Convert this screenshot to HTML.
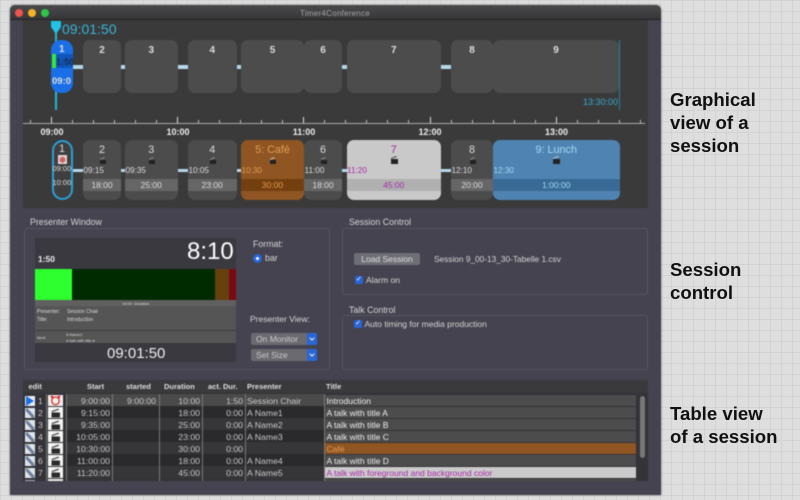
<!DOCTYPE html>
<html><head><meta charset="utf-8"><style>
html,body{margin:0;padding:0;width:800px;height:500px;overflow:hidden}
body{position:relative;font-family:"Liberation Sans",sans-serif;background-color:#dedede;
background-image:linear-gradient(#d3d3d3 1px,transparent 1px),linear-gradient(90deg,#d3d3d3 1px,transparent 1px);background-size:11px 11px}
div,span{position:absolute;box-sizing:border-box;white-space:nowrap}
svg{position:absolute}
#all{left:0;top:0;width:800px;height:500px;filter:blur(.45px)}
.b{background:#4c4c4c;border-radius:7px;height:53px;top:40px;color:#ddd;font-weight:bold;font-size:10px;text-align:center;padding-top:5px}
.c{background:#b5d8ea;height:4px;top:65px}
.c2{background:#b5d8ea;height:3.5px;top:168.5px}
.t{background:#bbb;width:1px;top:120px;height:3px}
.T{background:#ddd;width:1px;top:117px;height:6px}
.h{color:#eee;font-weight:bold;font-size:9px;top:127px;width:40px;text-align:center}
.s{background:#4c4c4c;border-radius:7px;top:140px;height:59.5px;color:#ddd;overflow:visible}
.n{left:0;right:0;top:4px;text-align:center;font-size:10.8px}
.d{left:0;right:0;top:38.5px;height:12px;background:#666;text-align:center;font-size:8.5px;line-height:12px}
.st{left:0.5px;top:26px;font-size:8.2px}
.g{border:1px solid #55545f;border-radius:3px;background:#44434f}
.l{color:#d6d6d6;font-size:8.8px}
.hd{top:380px;height:13px;font-size:7.5px;font-weight:bold;color:#ddd;line-height:13px;background:#3a3a3d}
.sep{width:1px;background:#777;top:394px;height:87px}
.r{font-size:8.7px;color:#c8c8c8;line-height:12px;height:12px;white-space:nowrap}
.tt{font-size:8.5px;left:326.5px}
.lab{left:670px;font-size:18.6px;font-weight:bold;color:#111;line-height:23px}
.ck{width:8px;height:8px;background:#2a66d8;border-radius:2px;color:#fff;font-size:7px;line-height:8px;text-align:center}
.sel{background:#6a6a70;border-radius:2px;height:12px;width:66px;left:251px;color:#ccc;font-size:8.5px;line-height:12px;padding-left:5px}
.sel i{position:absolute;right:0;top:0;width:10px;height:12px;background:#2a66d8;border-radius:0 2px 2px 0}
.sel svg{right:2px;top:4px}
</style></head><body>
<svg width="0" height="0" style="position:absolute"><defs>
<symbol id="clap" viewBox="0 0 15 11" preserveAspectRatio="none"><rect width="15" height="11" fill="#f4f4f4"/><path d="M3.500 5.500h8.500V10.500H3.500z" fill="#2a2a2a"/><path d="M3.500 4L10.500 1.500l.6 1.200-7 2.500z" fill="#555"/></symbol>
<symbol id="edit" viewBox="0 0 14 14"><rect width="14" height="14" fill="#dfe3ea"/><path d="M1 1L4 1 13 11 13 14 10 14 1 4z" fill="#6d7f9c"/></symbol>
</defs></svg>
<div id="all">
<div style="left:10px;top:5px;width:651px;height:490px;background:#44434f;border-radius:5px 5px 0 0;box-shadow:0 0 2px #777"></div>
<div style="left:10px;top:5px;width:651px;height:15px;background:linear-gradient(#4a4a4c,#373739);border-radius:5px 5px 0 0;border-bottom:1px solid #222"></div>
<div style="left:15px;top:9px;width:8px;height:8px;border-radius:50%;background:#f0524f"></div>
<div style="left:28px;top:9px;width:8px;height:8px;border-radius:50%;background:#f5b324"></div>
<div style="left:41px;top:9px;width:8px;height:8px;border-radius:50%;background:#2ec445"></div>
<div style="left:300px;top:8.500px;font-size:8px;color:#a5a5a5;letter-spacing:.25px">Timer4Conference</div>

<div style="left:23px;top:20px;width:625px;height:188px;background:#3a3a3a"></div>
<!-- top graphical -->
<div style="left:54.5px;top:28px;width:2px;height:82px;background:#23b5d8"></div>
<svg style="left:50px;top:20px" width="12" height="15"><path d="M1 1H11V7L6 14 1 7z" fill="#22c3e6"/></svg>
<div style="left:62px;top:21px;font-size:14px;color:#37b4da">09:01:50</div>
<div class="c" style="left:72px;width:11px"></div><div class="c" style="left:121px;width:4px"></div><div class="c" style="left:177.5px;width:10.5px"></div><div class="c" style="left:236.5px;width:4.5px"></div><div class="c" style="left:342px;width:4.5px"></div><div class="c" style="left:441px;width:10px"></div>
<div class="b" style="left:83px;width:38px">2</div>
<div class="b" style="left:125px;width:52.5px">3</div>
<div class="b" style="left:188px;width:48.5px">4</div>
<div class="b" style="left:241px;width:63px">5</div>
<div class="b" style="left:304px;width:38px">6</div>
<div class="b" style="left:346.5px;width:94.5px">7</div>
<div class="b" style="left:451px;width:42px">8</div>
<div class="b" style="left:493px;width:126px">9</div>
<div style="left:51px;top:40px;width:21.5px;height:53px;background:#1a6fe6;border-radius:10px;overflow:hidden;color:#ddd;font-weight:bold;font-size:10px;text-align:center">
<div style="left:0;right:0;top:4px">1</div>
<div style="left:0;right:0;top:14px;height:14px;background:#0f55bb"></div>
<div style="left:0.5px;top:14px;width:4px;height:14px;background:#35e83a"></div>
<div style="left:5px;top:17px;font-size:9px;color:#1a3050">1:50</div>
<div style="left:1px;top:36px;font-size:9.5px">09:0</div>
</div>
<div style="left:619px;top:40px;width:1px;height:70px;background:#2a7f9c"></div>
<div style="left:583px;top:97px;font-size:9px;color:#37a9cf">13:30:00</div>

<!-- ruler -->
<div style="left:23px;top:123px;width:622px;height:1px;background:#aaa"></div>
<div class="T" style="left:51px"></div><div class="t" style="left:30px"></div><div class="t" style="left:72px"></div><div class="t" style="left:93px"></div><div class="t" style="left:114px"></div><div class="t" style="left:135px"></div><div class="t" style="left:156px"></div>
<div class="T" style="left:177px"></div><div class="t" style="left:198px"></div><div class="t" style="left:219px"></div><div class="t" style="left:240px"></div><div class="t" style="left:261px"></div><div class="t" style="left:282px"></div>
<div class="T" style="left:303px"></div><div class="t" style="left:324px"></div><div class="t" style="left:345px"></div><div class="t" style="left:366px"></div><div class="t" style="left:387px"></div><div class="t" style="left:408px"></div>
<div class="T" style="left:430px"></div><div class="t" style="left:451px"></div><div class="t" style="left:472px"></div><div class="t" style="left:493px"></div><div class="t" style="left:514px"></div><div class="t" style="left:535px"></div>
<div class="T" style="left:556px"></div><div class="t" style="left:577px"></div><div class="t" style="left:598px"></div><div class="t" style="left:619px"></div><div class="t" style="left:640px"></div>
<div class="h" style="left:32px">09:00</div><div class="h" style="left:158px">10:00</div><div class="h" style="left:284px">11:00</div><div class="h" style="left:410px">12:00</div><div class="h" style="left:536.500px">13:00</div>

<!-- lower blocks -->
<div class="c2" style="left:73px;width:10px"></div><div class="c2" style="left:121px;width:4px"></div><div class="c2" style="left:177.5px;width:10.5px"></div><div class="c2" style="left:236.5px;width:4.5px"></div><div class="c2" style="left:342px;width:4.5px"></div><div class="c2" style="left:441px;width:10px"></div>
<div class="s" style="left:51.5px;width:21px;background:#3f3f3f;border:2px solid #2b9fd6;border-radius:10.5px;z-index:2">
<div class="n" style="top:1px">1</div><svg style="left:4px;top:13px" width="9" height="9"><rect width="9" height="9" fill="#e8d4d4"/><circle cx="4.500" cy="4.700" r="3" fill="#c66"/></svg>
<div style="left:-1px;top:22px;font-size:7.5px">09:00</div><div style="left:-1px;top:36px;font-size:7.5px">10:00</div></div>
<div class="s" style="left:83px;width:38px"><div class="n">2</div><svg style="left:16px;top:17px" width="7" height="7"><rect x="1" y="3" width="6" height="4" fill="#222"/><path d="M1 2L5 0l1 1-5 2z" fill="#888"/></svg><div class="st">09:15</div><div class="d">18:00</div></div>
<div class="s" style="left:125px;width:52.5px"><div class="n">3</div><svg style="left:23px;top:17px" width="7" height="7"><rect x="1" y="3" width="6" height="4" fill="#222"/><path d="M1 2L5 0l1 1-5 2z" fill="#888"/></svg><div class="st">09:35</div><div class="d">25:00</div></div>
<div class="s" style="left:188px;width:48.5px"><div class="n">4</div><svg style="left:21px;top:17px" width="7" height="7"><rect x="1" y="3" width="6" height="4" fill="#222"/><path d="M1 2L5 0l1 1-5 2z" fill="#888"/></svg><div class="st">10:05</div><div class="d">23:00</div></div>
<div class="s" style="left:241px;width:63px;background:#8f5623;color:#e09a50"><div class="n">5: Café</div><svg style="left:28px;top:17px" width="7" height="7"><rect x="1" y="3" width="6" height="4" fill="#222"/><path d="M1 2L5 0l1 1-5 2z" fill="#bbb"/></svg><div class="st">10:30</div><div class="d" style="background:#733f0e">30:00</div></div>
<div class="s" style="left:304px;width:38px"><div class="n">6</div><svg style="left:16px;top:17px" width="7" height="7"><rect x="1" y="3" width="6" height="4" fill="#222"/><path d="M1 2L5 0l1 1-5 2z" fill="#888"/></svg><div class="st">11:00</div><div class="d">18:00</div></div>
<div class="s" style="left:346.5px;width:94.5px;background:#c9c9c9;color:#a82ba8"><div class="n">7</div><svg style="left:43px;top:16px" width="8" height="8"><rect x="1" y="3" width="7" height="5" fill="#222"/><path d="M1 2L6 0l1 1-6 2z" fill="#555"/></svg><div class="st">11:20</div><div class="d" style="background:#b0b0b0">45:00</div></div>
<div class="s" style="left:451px;width:42px"><div class="n">8</div><svg style="left:18px;top:17px" width="7" height="7"><rect x="1" y="3" width="6" height="4" fill="#222"/><path d="M1 2L5 0l1 1-5 2z" fill="#888"/></svg><div class="st">12:10</div><div class="d">20:00</div></div>
<div class="s" style="left:493px;width:126.5px;background:#4f83b2;color:#9fdcf3"><div class="n">9: Lunch</div><svg style="left:59px;top:16px" width="8" height="8"><rect x="1" y="3" width="7" height="5" fill="#222"/><path d="M1 2L6 0l1 1-6 2z" fill="#bbb"/></svg><div class="st">12:30</div><div class="d" style="background:#396995">1:00:00</div></div>

<!-- presenter group -->
<div class="l" style="left:30px;top:217px">Presenter Window</div>
<div class="g" style="left:23.5px;top:228px;width:306px;height:142px"></div>
<div style="left:34.5px;top:238px;width:201.5px;height:124px;background:#3a3940"></div>
<div style="left:187px;top:238px;font-size:24px;color:#fff">8:10</div>
<div style="left:38px;top:254px;font-size:8.500px;font-weight:bold;color:#eee">1:50</div>
<div style="left:34.5px;top:269px;width:37px;height:31px;background:#2eff2e"></div>
<div style="left:71.5px;top:269px;width:143.5px;height:31px;background:#002a00"></div>
<div style="left:215px;top:269px;width:14px;height:31px;background:#66400e"></div>
<div style="left:229px;top:269px;width:7px;height:31px;background:#7a0a10"></div>
<div style="left:34.5px;top:300px;width:201.5px;height:6px;background:#606060"></div>
<div style="left:34.5px;top:306px;width:201.5px;height:24px;background:#555"></div>
<div style="left:34.5px;top:331px;width:201.5px;height:12px;background:#555"></div>
<div style="left:122px;top:300.500px;font-size:4px;color:#ddd">10:00&nbsp; Duration</div>
<div style="left:37px;top:309px;font-size:5px;color:#ddd">Presenter:</div><div style="left:67px;top:309px;font-size:5px;color:#ddd">Session Chair</div>
<div style="left:37px;top:317px;font-size:5px;color:#ddd">Title:</div><div style="left:67px;top:317px;font-size:5px;color:#ddd">Introduction</div>
<div style="left:37px;top:335px;font-size:4px;color:#ddd">Next:</div><div style="left:66px;top:332px;font-size:4px;color:#ddd">A Name1</div><div style="left:66px;top:338px;font-size:4px;color:#ddd">A talk with title A</div>
<div style="left:107px;top:344.500px;font-size:15px;color:#eee">09:01:50</div>
<div class="l" style="left:253px;top:239px">Format:</div>
<div style="left:253px;top:254px;width:9px;height:9px;border-radius:50%;background:#2a66d8"></div><div style="left:256px;top:257px;width:3px;height:3px;border-radius:50%;background:#fff"></div>
<div class="l" style="left:265px;top:253px">bar</div>
<div class="l" style="left:250px;top:314px;font-size:8.500px">Presenter View:</div>
<div class="sel" style="top:333px">On Monitor<i></i><svg width="6" height="4"><path d="M.8.8L3 3 5.200.8" fill="none" stroke="#fff" stroke-width="1"/></svg></div>
<div class="sel" style="top:349px">Set Size<i></i><svg width="6" height="4"><path d="M.8.8L3 3 5.200.8" fill="none" stroke="#fff" stroke-width="1"/></svg></div>

<!-- session control -->
<div class="l" style="left:349px;top:217px">Session Control</div>
<div class="g" style="left:342px;top:228px;width:306px;height:67px"></div>
<div style="left:354px;top:253px;width:66px;height:12px;background:#6e6e76;border-radius:2px;color:#ddd;font-size:8.5px;line-height:12px;text-align:center">Load Session</div>
<div class="l" style="left:434px;top:254px;font-size:8.3px">Session 9_00-13_30-Tabelle 1.csv</div>
<div class="ck" style="left:355px;top:276px">✓</div><div class="l" style="left:366px;top:275px;font-size:8.5px">Alarm on</div>
<div class="l" style="left:349px;top:305px">Talk Control</div>
<div class="g" style="left:342px;top:315px;width:306px;height:55px"></div>
<div class="ck" style="left:354px;top:319.500px">✓</div><div class="l" style="left:364.500px;top:318.500px;font-size:8.5px">Auto timing for media production</div>

<!-- table -->
<div style="left:23px;top:380px;width:625px;height:101px;background:#333338"></div>
<div class="hd" style="left:23px;width:625px"></div>
<div class="hd" style="left:28.500px">edit</div><div class="hd" style="left:87px">Start</div><div class="hd" style="left:126px">started</div><div class="hd" style="left:164px">Duration</div><div class="hd" style="left:208px">act. Dur.</div><div class="hd" style="left:247px">Presenter</div><div class="hd" style="left:326px">Title</div>
<div style="left:66px;top:394px;width:258px;height:12px;background:#4a4a4a"></div>
<div style="left:66px;top:406px;width:258px;height:12px;background:#2a2a2c"></div>
<div style="left:66px;top:418px;width:258px;height:12px;background:#363638"></div>
<div style="left:66px;top:430px;width:258px;height:12px;background:#2a2a2c"></div>
<div style="left:66px;top:442px;width:258px;height:12px;background:#363638"></div>
<div style="left:66px;top:454px;width:258px;height:12px;background:#2a2a2c"></div>
<div style="left:66px;top:466px;width:258px;height:12px;background:#363638"></div>
<div class="sep" style="left:45.500px"></div><div class="sep" style="left:65.500px"></div><div class="sep" style="left:112px"></div><div class="sep" style="left:158.500px"></div><div class="sep" style="left:201.500px"></div><div class="sep" style="left:244.500px"></div><div class="sep" style="left:323.500px"></div>

<div style="left:325px;top:395px;width:311px;height:11px;background:#4c4c4c"></div>
<div style="left:325px;top:407px;width:311px;height:11px;background:#4c4c4c"></div>
<div style="left:325px;top:419px;width:311px;height:11px;background:#4c4c4c"></div>
<div style="left:325px;top:431px;width:311px;height:11px;background:#4c4c4c"></div>
<div style="left:325px;top:443px;width:311px;height:11px;background:#8f5623"></div>
<div style="left:325px;top:455px;width:311px;height:11px;background:#4c4c4c"></div>
<div style="left:325px;top:467px;width:311px;height:11px;background:#cbcbcb"></div>
<div style="left:325px;top:479px;width:311px;height:2px;background:#4c4c4c"></div>
<div style="left:640px;top:396px;width:5px;height:62px;background:#777;border-radius:3px"></div>

<svg style="left:25px;top:396px" width="10" height="10"><rect width="10" height="10" fill="#e8ecf5"/><path d="M1 0L9 5 1 10z" fill="#1a6fe6"/></svg>
<svg style="left:25px;top:408px" width="10" height="10"><use href="#edit"/></svg>
<svg style="left:25px;top:420px" width="10" height="10"><use href="#edit"/></svg>
<svg style="left:25px;top:432px" width="10" height="10"><use href="#edit"/></svg>
<svg style="left:25px;top:444px" width="10" height="10"><use href="#edit"/></svg>
<svg style="left:25px;top:456px" width="10" height="10"><use href="#edit"/></svg>
<svg style="left:25px;top:468px" width="10" height="10"><use href="#edit"/></svg>
<div style="left:25px;top:479.500px;width:10px;height:1.500px;background:#aab"></div>
<svg style="left:48px;top:395px" width="15" height="11"><rect width="15" height="11" fill="#f4eeee"/><circle cx="7.500" cy="5.800" r="3.800" fill="none" stroke="#c33" stroke-width="1.300"/><circle cx="4" cy="1.800" r="1.300" fill="#c33"/><circle cx="11" cy="1.800" r="1.300" fill="#c33"/></svg>
<svg style="left:48px;top:407px" width="15" height="11"><use href="#clap" width="15" height="11"/></svg>
<svg style="left:48px;top:419px" width="15" height="11"><use href="#clap" width="15" height="11"/></svg>
<svg style="left:48px;top:431px" width="15" height="11"><use href="#clap" width="15" height="11"/></svg>
<svg style="left:48px;top:443px" width="15" height="11"><use href="#clap" width="15" height="11"/></svg>
<svg style="left:48px;top:455px" width="15" height="11"><use href="#clap" width="15" height="11"/></svg>
<svg style="left:48px;top:467px" width="15" height="11"><use href="#clap" width="15" height="11"/></svg>
<div style="left:48px;top:479px;width:15px;height:2px;background:#eee"></div>

<div class="r" style="left:38px;top:395px">1</div><div class="r" style="left:38px;top:407px">2</div><div class="r" style="left:38px;top:419px">3</div><div class="r" style="left:38px;top:431px">4</div><div class="r" style="left:38px;top:442.500px">5</div><div class="r" style="left:38px;top:454.500px">6</div><div class="r" style="left:38px;top:466.500px">7</div>

<div class="r" style="right:690px;top:395px">9:00:00</div><div class="r" style="right:644px;top:395px">9:00:00</div><div class="r" style="right:600px;top:395px">10:00</div><div class="r" style="right:557px;top:395px">1:50</div><div class="r" style="left:247px;top:395px">Session Chair</div>
<div class="r" style="right:690px;top:407px">9:15:00</div><div class="r" style="right:600px;top:407px">18:00</div><div class="r" style="right:557px;top:407px">0:00</div><div class="r" style="left:247px;top:407px">A Name1</div>
<div class="r" style="right:690px;top:419px">9:35:00</div><div class="r" style="right:600px;top:419px">25:00</div><div class="r" style="right:557px;top:419px">0:00</div><div class="r" style="left:247px;top:419px">A Name2</div>
<div class="r" style="right:690px;top:431px">10:05:00</div><div class="r" style="right:600px;top:431px">23:00</div><div class="r" style="right:557px;top:431px">0:00</div><div class="r" style="left:247px;top:431px">A Name3</div>
<div class="r" style="right:690px;top:442.500px">10:30:00</div><div class="r" style="right:600px;top:442.500px">30:00</div><div class="r" style="right:557px;top:442.500px">0:00</div>
<div class="r" style="right:690px;top:454.500px">11:00:00</div><div class="r" style="right:600px;top:454.500px">18:00</div><div class="r" style="right:557px;top:454.500px">0:00</div><div class="r" style="left:247px;top:454.500px">A Name4</div>
<div class="r" style="right:690px;top:466.500px">11:20:00</div><div class="r" style="right:600px;top:466.500px">45:00</div><div class="r" style="right:557px;top:466.500px">0:00</div><div class="r" style="left:247px;top:466.500px">A Name5</div>

<div class="r tt" style="top:395px;color:#eee">Introduction</div>
<div class="r tt" style="top:407px;color:#eee">A talk with title A</div>
<div class="r tt" style="top:419px;color:#eee">A talk with title B</div>
<div class="r tt" style="top:431px;color:#eee">A talk with title C</div>
<div class="r tt" style="top:443px;color:#e09a50">Café</div>
<div class="r tt" style="top:455px;color:#eee">A talk with title D</div>
<div class="r tt" style="top:467px;color:#a82ba8">A talk with foreground and background color</div>
</div>
<div class="lab" style="top:88px">Graphical<br>view of a<br>session</div>
<div class="lab" style="top:258px">Session<br>control</div>
<div class="lab" style="top:402px">Table view<br>of a session</div>
</body></html>
